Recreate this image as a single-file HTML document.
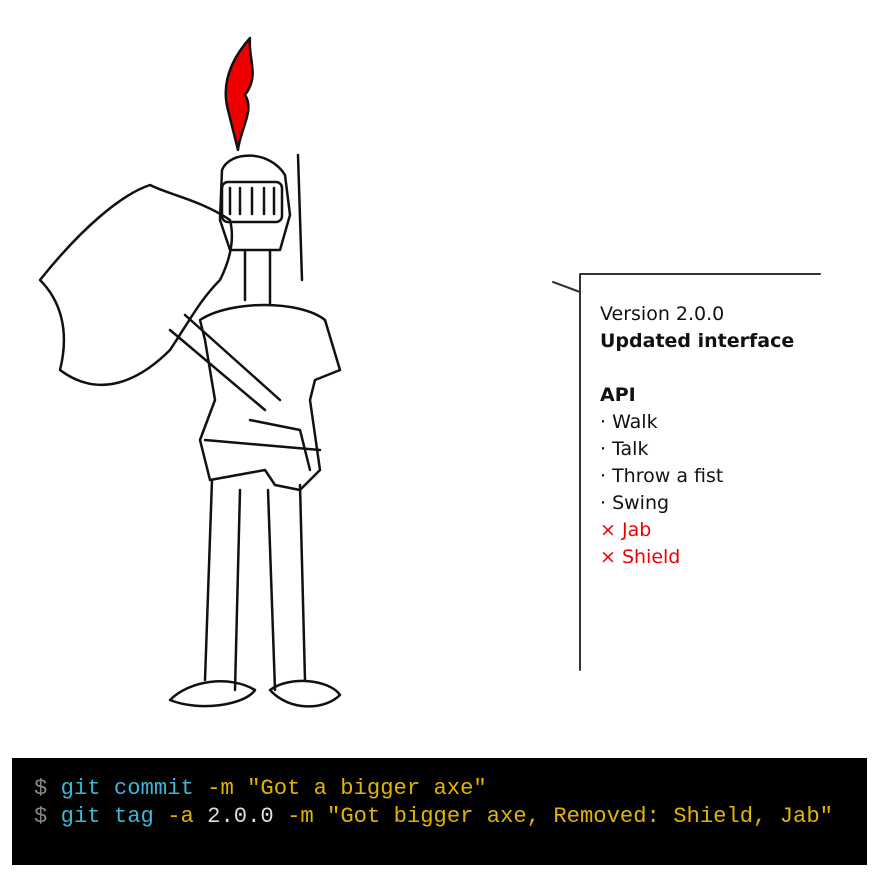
<!DOCTYPE html>
<html><head><meta charset="utf-8"><style>
body{margin:0;width:880px;height:880px;background:#fff;position:relative;overflow:hidden}
.t{position:absolute;left:600px;top:301px;font-family:"DejaVu Sans","Liberation Sans",sans-serif;font-size:19px;line-height:27px;color:#111}
.r{color:#e00}
.term{position:absolute;left:12px;top:758px;width:855px;height:107px;background:#000;font-family:"Liberation Mono",monospace;font-size:22.2px;line-height:28px;padding-top:17px;box-sizing:border-box;padding-left:22px;white-space:pre}
.g{color:#888}.c{color:#3bb6d6}.y{color:#e0b400}.w{color:#ddd}
</style></head><body>
<svg width="880" height="880" style="position:absolute;left:0;top:0" fill="none" stroke="#111" stroke-width="2.5" stroke-linecap="round" stroke-linejoin="round">
<path d="M580 274H820M580 274V292L553 282L580 292V670" stroke="#333" stroke-width="2"/>
<path d="M228 110C220 80 235 55 250 38C248 60 260 75 245 95C255 110 240 130 238 150Z" fill="#e00" stroke="#111"/>
<path d="M222 170C230 150 270 150 285 175L290 215L280 250H230L220 220Z"/>
<rect x="222" y="182" width="60" height="40" rx="6"/>
<path d="M230 188v26M240 188v26M252 188v26M264 188v26M274 188v26"/>
<path d="M150 185C120 195 80 230 40 280C60 300 70 330 60 370C100 400 140 380 170 350C190 320 200 300 220 280C230 260 235 240 230 220C200 200 170 195 150 185Z"/>
<path d="M170 330L265 410M185 315L280 400"/>
<path d="M245 250V300M270 250V305M200 320C230 300 300 300 325 320L340 370L315 380L310 400L320 470L300 490L275 485L265 470L210 480L200 440L215 400L205 340Z"/>
<path d="M250 420L300 430L310 470M205 440L320 450"/>
<path d="M212 480L205 680M240 490L235 690M268 490L275 690M300 485L305 680"/>
<path d="M170 700C190 680 230 675 255 690C245 705 200 712 170 700ZM270 690C290 675 330 680 340 695C325 710 290 712 270 690Z"/>
<path d="M298 155L302 280"/>
</svg>
<div class="t">Version 2.0.0<br><b>Updated interface</b><br><br><b>API</b><br>· Walk<br>· Talk<br>· Throw a fist<br>· Swing<br><span class="r">× Jab<br>× Shield</span></div>
<div class="term"><span class="g">$</span> <span class="c">git commit</span> <span class="y">-m "Got a bigger axe"</span>
<span class="g">$</span> <span class="c">git tag</span> <span class="y">-a</span> <span class="w">2.0.0</span> <span class="y">-m "Got bigger axe, Removed: Shield, Jab"</span></div>
</body></html>
